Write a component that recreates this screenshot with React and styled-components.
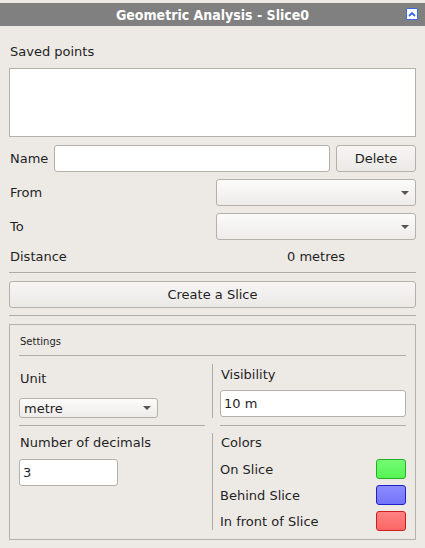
import React from "react";
import styled, { createGlobalStyle } from "styled-components";

const GlobalStyle = createGlobalStyle`
  html, body {
    margin: 0;
    padding: 0;
    background: #edeae6;
  }
  body {
    font-family: "DejaVu Sans", "Liberation Sans", sans-serif;
    font-size: 13px;
    color: #1f1f1f;
  }
`;

const Window = styled.div`
  width: 425px;
  height: 548px;
  box-sizing: border-box;
  padding-top: 3px;
  display: flex;
  flex-direction: column;
  background: #edeae6;
  overflow: hidden;
`;

const TitleBar = styled.div`
  flex-shrink: 0;
  height: 23px;
  background: #808080;
  color: #ffffff;
  font-family: "DejaVu Sans Condensed", "DejaVu Sans", sans-serif;
  font-size: 14px;
  font-weight: bold;
  display: flex;
  align-items: center;
  justify-content: center;
  position: relative;
`;

const ShadeButton = styled.div`
  position: absolute;
  right: 7px;
  top: 5px;
  width: 12px;
  height: 12px;
  box-sizing: border-box;
  background: #ffffff;
  border: 1px solid #3d68e6;
  border-radius: 1px;
  display: flex;
  align-items: center;
  justify-content: center;
`;

const Body = styled.div`
  padding: 0 9px;
  display: flex;
  flex-direction: column;
  & > * {
    flex-shrink: 0;
  }
`;

const Label = styled.div`
  flex-shrink: 0;
  height: ${(p) => p.h || 20}px;
  margin-top: ${(p) => p.mt || 0}px;
  display: flex;
  align-items: center;
  padding-left: ${(p) => p.indent || 1}px;
  font-size: ${(p) => p.size || 13}px;
  white-space: nowrap;
`;

const ListBox = styled.div`
  margin-top: 7px;
  height: 69px;
  box-sizing: border-box;
  background: #ffffff;
  border: 1px solid #b4b0aa;
`;

const Row = styled.div`
  margin-top: ${(p) => p.mt || 7}px;
  height: ${(p) => p.h || 27}px;
  display: flex;
  align-items: center;
`;

const RowLabel = styled.div`
  padding-left: 1px;
  width: ${(p) => (p.w ? `${p.w}px` : "auto")};
  flex: none;
  white-space: nowrap;
`;

const TextInput = styled.div`
  flex-shrink: 0;
  height: 27px;
  margin-top: ${(p) => p.mt || 0}px;
  width: ${(p) => (p.w ? `${p.w}px` : "auto")};
  flex-grow: ${(p) => (p.grow ? 1 : 0)};
  box-sizing: border-box;
  background: #ffffff;
  border: 1px solid #b4b0aa;
  border-radius: 3px;
  display: flex;
  align-items: center;
  padding-left: 3px;
`;

const Button = styled.div`
  height: 27px;
  width: ${(p) => (p.w ? `${p.w}px` : "auto")};
  margin-left: ${(p) => p.ml || 0}px;
  flex: ${(p) => (p.grow ? 1 : "none")};
  box-sizing: border-box;
  border: 1px solid #b4b0aa;
  border-radius: 3px;
  background: linear-gradient(#f7f6f5, #ebe9e6);
  display: flex;
  align-items: center;
  justify-content: center;
`;

const Combo = styled.div`
  flex-shrink: 0;
  height: ${(p) => p.h || 27}px;
  width: ${(p) => p.w}px;
  margin-left: ${(p) => (p.left ? "0" : "auto")};
  margin-top: ${(p) => p.mt || 0}px;
  box-sizing: border-box;
  border: 1px solid #b4b0aa;
  border-radius: 3px;
  background: linear-gradient(#fbfbfa, #eeecea);
  display: flex;
  align-items: center;
  padding: 0 6px 0 4px;
`;

const ComboText = styled.span`
  flex: 1;
`;

const Arrow = styled.span`
  width: 0;
  height: 0;
  border-left: 4px solid transparent;
  border-right: 4px solid transparent;
  border-top: 4px solid #555555;
`;

const Separator = styled.div`
  flex-shrink: 0;
  margin-top: ${(p) => p.mt || 0}px;
  height: 1px;
  background: #aeaaa4;
`;

const Value = styled.div`
  width: 200px;
  margin-left: auto;
  text-align: center;
`;

const GroupBox = styled.div`
  margin-top: 8px;
  box-sizing: border-box;
  border: 1px solid #b4b0aa;
  padding: 0 9px;
  display: flex;
  flex-direction: column;
`;

const Grid = styled.div`
  flex-shrink: 0;
  display: grid;
  grid-template-columns: 186px 15px 186px;
  grid-template-rows: 69px 1px 113px;
`;

const VLine = styled.div`
  grid-column: 2;
  grid-row: ${(p) => p.row};
  justify-self: center;
  width: 1px;
  margin-top: ${(p) => p.mt || 0}px;
  height: ${(p) => p.h}px;
  background: #aeaaa4;
`;

const Cell = styled.div`
  grid-column: ${(p) => p.col};
  grid-row: ${(p) => p.row};
  display: flex;
  flex-direction: column;
`;

const GridRule = styled.div`
  grid-column: ${(p) => p.col};
  grid-row: 2;
  background: #aeaaa4;
`;

const ColorRow = styled.div`
  flex-shrink: 0;
  height: 20px;
  margin-top: ${(p) => p.mt || 6}px;
  display: flex;
  align-items: center;
  justify-content: space-between;
`;

const Swatch = styled.div`
  width: 30px;
  height: 20px;
  box-sizing: border-box;
  border-radius: 3px;
  border: 1px solid ${(p) => p.edge};
  background: linear-gradient(${(p) => p.light}, ${(p) => p.fill});
`;

const colors = [
  { label: "On Slice", fill: "#55f455", light: "#74fb74", edge: "#22b022" },
  { label: "Behind Slice", fill: "#7474fb", light: "#8c8cff", edge: "#2020c8" },
  { label: "In front of Slice", fill: "#fa6666", light: "#ff8282", edge: "#d01c1c" },
];

export default function App() {
  return (
    <>
      <GlobalStyle />
      <Window>
        <TitleBar>
          Geometric Analysis - Slice0
          <ShadeButton>
            <svg width="8" height="6" viewBox="0 0 8 6">
              <path d="M1 5 L4 2 L7 5" fill="none" stroke="#3d68e6" strokeWidth="1.8" />
            </svg>
          </ShadeButton>
        </TitleBar>
        <Body>
          <Label mt={15}>Saved points</Label>
          <ListBox />
          <Row mt={8}>
            <RowLabel w={44}>Name</RowLabel>
            <TextInput grow />
            <Button w={80} ml={6}>Delete</Button>
          </Row>
          <Row>
            <RowLabel>From</RowLabel>
            <Combo w={200}>
              <ComboText />
              <Arrow />
            </Combo>
          </Row>
          <Row>
            <RowLabel>To</RowLabel>
            <Combo w={200}>
              <ComboText />
              <Arrow />
            </Combo>
          </Row>
          <Row mt={6} h={20}>
            <RowLabel>Distance</RowLabel>
            <Value>0 metres</Value>
          </Row>
          <Separator mt={6} />
          <Row mt={8}>
            <Button grow>Create a Slice</Button>
          </Row>
          <Separator mt={7} />
          <GroupBox>
            <Label mt={9} h={14} size={10}>Settings</Label>
            <Separator mt={7} />
            <Grid>
              <Cell col={1} row={1}>
                <Label mt={13} h={18}>Unit</Label>
                <Combo left h={20} w={139} mt={11}>
                  <ComboText>metre</ComboText>
                  <Arrow />
                </Combo>
              </Cell>
              <VLine row={1} mt={8} h={54} />
              <Cell col={3} row={1}>
                <Label mt={9} h={18}>Visibility</Label>
                <TextInput mt={7}>10 m</TextInput>
              </Cell>
              <GridRule col={1} />
              <GridRule col={3} />
              <VLine row={3} mt={7} h={97} />
              <Cell col={1} row={3}>
                <Label mt={7} h={18}>Number of decimals</Label>
                <TextInput w={99} mt={8}>3</TextInput>
              </Cell>
              <Cell col={3} row={3}>
                <Label mt={7} h={18}>Colors</Label>
                {colors.map((c, i) => (
                  <ColorRow key={c.label} mt={i === 0 ? 8 : 6}>
                    <span>{c.label}</span>
                    <Swatch fill={c.fill} light={c.light} edge={c.edge} />
                  </ColorRow>
                ))}
              </Cell>
            </Grid>
          </GroupBox>
        </Body>
      </Window>
    </>
  );
}
